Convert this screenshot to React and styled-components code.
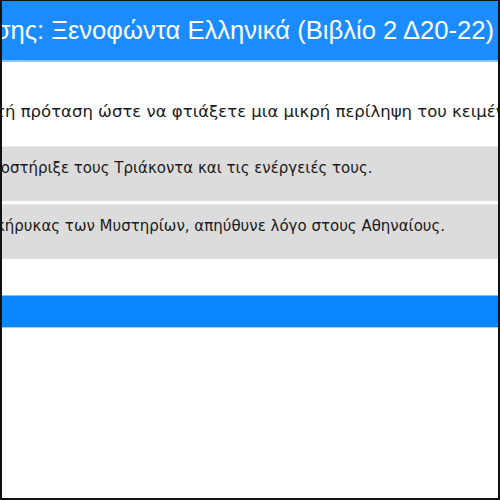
import React from "react";
import styled, { createGlobalStyle } from "styled-components";

const Global = createGlobalStyle`
  html, body {
    margin: 0;
    padding: 0;
    background: #fff;
  }
`;

const Frame = styled.div`
  box-sizing: border-box;
  width: 500px;
  height: 500px;
  border: 2px solid #111;
  border-top-width: 1px;
  overflow: hidden;
  background: #fff;
  display: flex;
  flex-direction: column;
  font-family: "DejaVu Sans", Verdana, sans-serif;
`;

const Header = styled.header`
  height: 59px;
  background: #1a8cff;
  border-bottom: 2px solid #8cc4ff;
  display: flex;
  align-items: center;
  justify-content: flex-end;
  padding-right: 4px;
  white-space: nowrap;
  overflow: hidden;
`;

const Title = styled.h1`
  margin: 0;
  flex-shrink: 0;
  font-family: "Liberation Sans", Arial, sans-serif;
  font-weight: normal;
  font-size: 25.6px;
  color: #fff;
`;

const Instruction = styled.p`
  margin: 40px 0 0 0;
  font-size: 16.5px;
  color: #1a1a1a;
  white-space: nowrap;
  overflow: hidden;
  text-indent: -7px;
`;

const List = styled.div`
  margin-top: 25px;
  display: flex;
  flex-direction: column;
  gap: 3px;
`;

const Row = styled.div`
  box-sizing: border-box;
  height: 55px;
  background: #dcdcdc;
  padding: 12px 0 0 0;
  font-size: 15px;
  color: #1a1a1a;
  white-space: nowrap;
  overflow: hidden;
  text-indent: ${(p) => p.$indent}px;
  border-top: 1px solid #e8e8e8;
`;

const Bar = styled.div`
  margin-top: 36px;
  height: 31px;
  background: #0a84ff;
  border-top: 1px solid #7fbfff;
  border-bottom: 1px solid #9fd0ff;
`;

export default function App() {
  return (
    <>
      <Global />
      <Frame>
        <Header>
          <Title>Άσκηση κατανόησης: Ξενοφώντα Ελληνικά (Βιβλίο 2 Δ20-22)</Title>
        </Header>
        <Instruction>
          τή πρόταση ώστε να φτιάξετε μια μικρή περίληψη του κειμένου.
        </Instruction>
        <List>
          <Row $indent={-19}>υποστήριξε τους Τριάκοντα και τις ενέργειές τους.</Row>
          <Row $indent={-6}>κήρυκας των Μυστηρίων, απηύθυνε λόγο στους Αθηναίους.</Row>
        </List>
        <Bar />
      </Frame>
    </>
  );
}
